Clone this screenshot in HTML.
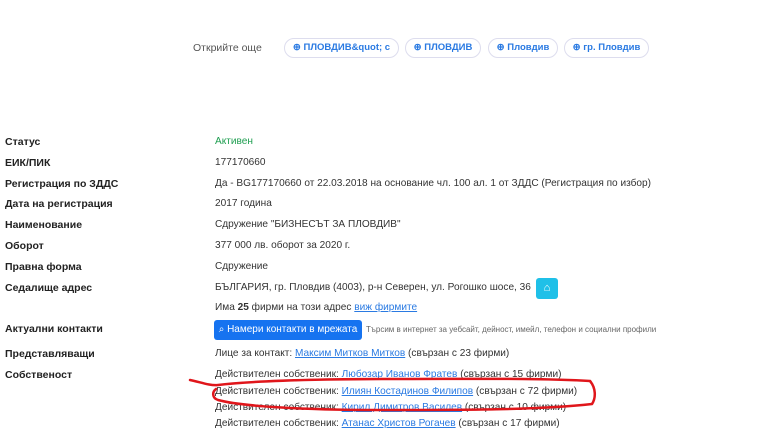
<!DOCTYPE html><html><head><meta charset="utf-8"><style>
body{margin:0;width:768px;height:432px;background:#fff;font-family:"Liberation Sans",sans-serif;position:relative;overflow:hidden;color:#333}
.l{position:absolute;left:5px;font-weight:bold;font-size:10.5px;color:#222}
.v{position:absolute;left:215px;font-size:10.1px;color:#333;white-space:nowrap}
a{color:#2a7ae2;text-decoration:underline}
.chip{position:absolute;top:38px;border:1px solid #dde;border-radius:10px;font-size:9.5px;font-weight:bold;color:#2a7ae2;line-height:18px;box-sizing:border-box;height:20px;white-space:nowrap;text-align:center;overflow:hidden}
</style></head><body>
<div style="position:absolute;left:193px;top:42px;font-size:10.5px;color:#555">Открийте още</div>
<div class="chip" style="left:284px;width:115px">⊕ ПЛОВДИВ&amp;quot; с</div>
<div class="chip" style="left:405px;width:76px">⊕ ПЛОВДИВ</div>
<div class="chip" style="left:488px;width:70px">⊕ Пловдив</div>
<div class="chip" style="left:564px;width:85px">⊕ гр. Пловдив</div>

<div class="l" style="top:136px">Статус</div><div class="v" style="top:136px;color:#1e9e50">Активен</div>
<div class="l" style="top:157px">ЕИК/ПИК</div><div class="v" style="top:157px">177170660</div>
<div class="l" style="top:178px">Регистрация по ЗДДС</div><div class="v" style="top:178px">Да - BG177170660 от 22.03.2018 на основание чл. 100 ал. 1 от ЗДДС (Регистрация по избор)</div>
<div class="l" style="top:198px">Дата на регистрация</div><div class="v" style="top:198px">2017 година</div>
<div class="l" style="top:219px">Наименование</div><div class="v" style="top:219px">Сдружение "БИЗНЕСЪТ ЗА ПЛОВДИВ"</div>
<div class="l" style="top:240px">Оборот</div><div class="v" style="top:240px">377 000 лв. оборот за 2020 г.</div>
<div class="l" style="top:261px">Правна форма</div><div class="v" style="top:261px">Сдружение</div>
<div class="l" style="top:282px">Седалище адрес</div><div class="v" style="top:282px">БЪЛГАРИЯ, гр. Пловдив (4003), р-н Северен, ул. Рогошко шосе, 36</div>
<div style="position:absolute;left:536px;top:278px;width:22px;height:21px;background:#1fc0e8;border-radius:3px;color:#fff;font-size:11px;text-align:center;line-height:21px">⌂</div>
<div class="v" style="top:302px">Има <b>25</b> фирми на този адрес <a>виж фирмите</a></div>
<div class="l" style="top:323px">Актуални контакти</div>
<div style="position:absolute;left:214px;top:320px;width:148px;height:20px;background:#1673f0;border-radius:3px;color:#fff;font-size:10px;line-height:20px;text-align:center">⌕ Намери контакти в мрежата</div>
<div style="position:absolute;left:366px;top:325px;font-size:8px;color:#666;white-space:nowrap">Търсим в интернет за уебсайт, дейност, имейл, телефон и социални профили</div>
<div class="l" style="top:348px">Представляващи</div><div class="v" style="top:348px">Лице за контакт: <a>Максим Митков Митков</a> (свързан с 23 фирми)</div>
<div class="l" style="top:369px">Собственост</div>
<div class="v" style="top:369px">Действителен собственик: <a>Любозар Иванов Фратев</a> (свързан с 15 фирми)</div>
<div class="v" style="top:386px">Действителен собственик: <a>Илиян Костадинов Филипов</a> (свързан с 72 фирми)</div>
<div class="v" style="top:402px">Действителен собственик: <a>Кирил Димитров Василев</a> (свързан с 10 фирми)</div>
<div class="v" style="top:418px">Действителен собственик: <a>Атанас Христов Рогачев</a> (свързан с 17 фирми)</div>
<svg style="position:absolute;left:0;top:0" width="768" height="432"><path d="M190 380 C200 382 210 386 218 385 C260 380 330 379 400 379 C470 379 540 378 590 381 C596 388 596 398 592 404 C540 410 460 410 380 410 C300 410 240 406 218 400 C212 398 212 392 216 389" fill="none" stroke="#e0161b" stroke-width="2.5" stroke-linecap="round"/></svg>
</body></html>
